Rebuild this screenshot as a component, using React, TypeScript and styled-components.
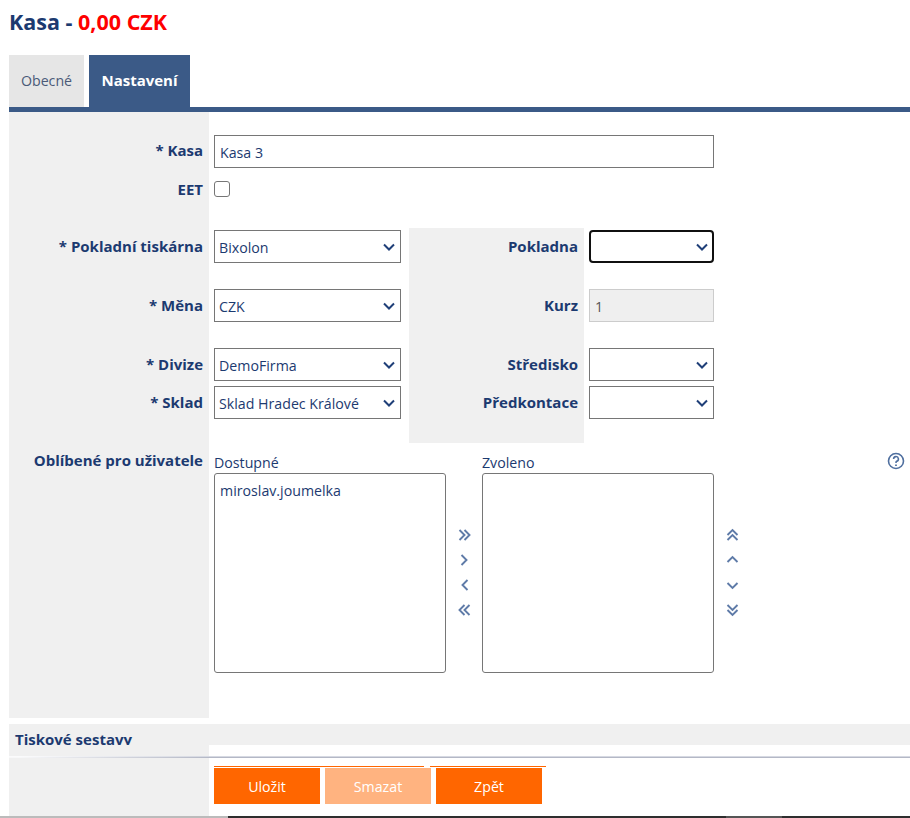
import React from "react";
import styled, { createGlobalStyle } from "styled-components";

const Global = createGlobalStyle`
  html, body { margin: 0; padding: 0; background: #fff; height: 100%; overflow: hidden; }
  body { font-family: "Open Sans", "DejaVu Sans", sans-serif; font-size: 14.2px; color: #1c3a70; }
`;
const boldFont = `font-weight: 700; font-size: 15px;`;
const Page = styled.div`
  width: 910px; height: 818px; display: flex; flex-direction: column; overflow: hidden;
`;
const Title = styled.h1`
  margin: 0; padding: 8px 0 0 9px; height: 55px; box-sizing: border-box;
  font-weight: 700; font-size: 21.5px; line-height: 28px; color: #1c3a70;
`;
const Money = styled.span` color: #ff0000; `;
const Tabs = styled.div`
  display: flex; gap: 5px; padding-left: 9px; height: 52px;
`;
const Tab = styled.div<{ $active?: boolean }>`
  display: flex; align-items: center; justify-content: center; padding-bottom: 2px; box-sizing: border-box;
  width: ${p => (p.$active ? 101 : 75)}px;
  background: ${p => (p.$active ? "#3b5a87" : "#e6e6e6")};
  color: ${p => (p.$active ? "#fff" : "#4a5a78")};
  ${p => (p.$active ? boldFont : "")}
`;
const TabRule = styled.div` height: 5px; background: #3b5a87; margin-left: 9px; `;
const Body = styled.div` margin-left: 9px; `;
const Row = styled.div<{ $h: number }>`
  display: flex; height: ${p => p.$h}px;
`;
const Label = styled.div<{ $top: number }>`
  width: 200px; flex: none; box-sizing: border-box; background: #f0f0f0;
  text-align: right; padding: ${p => p.$top}px 6px 0 0;
  ${boldFont} line-height: 20px; white-space: nowrap;
`;
const Field = styled.div<{ $top: number }>`
  padding: ${p => p.$top}px 0 0 5px;
`;
const TextInput = styled.input<{ $w: number }>`
  display: block; width: ${p => p.$w}px; height: 33px; box-sizing: border-box;
  border: 1px solid #767676; padding: 2px 5px 0; margin: 0; border-radius: 0; background: #fff;
  font: inherit; color: #1c3a70;
  &:disabled { background: #efefef; border-color: #ccc; color: #555; }
`;
const Check = styled.span`
  display: block; width: 16px; height: 16px; box-sizing: border-box;
  border: 1px solid #767676; border-radius: 3px; background: #fff;
`;
const Grid = styled.div`
  display: grid;
  grid-template-columns: 200px 200px 175px 130px;
  grid-template-rows: 59px 59px 38px 59px;
`;
const GreyLabel = styled.div`
  background: #f0f0f0; box-sizing: border-box; text-align: right;
  padding: 8px 6px 0 0; ${boldFont} line-height: 20px; white-space: nowrap;
`;
const SelectCell = styled.div` padding: 2px 0 0 5px; `;
const SelectBox = styled.div<{ $w: number; $focus?: boolean }>`
  position: relative; width: ${p => p.$w}px; height: 33px; box-sizing: border-box;
  border: ${p => (p.$focus ? "2px solid #101010" : "1px solid #767676")};
  border-radius: ${p => (p.$focus ? 4 : 0)}px; background: #fff;
  display: flex; align-items: center; padding: 2px 0 0 ${p => (p.$focus ? 3 : 4)}px;
  white-space: nowrap;
`;
const Chevron = styled.svg<{ $focus?: boolean }>`
  position: absolute; right: ${p => (p.$focus ? 4 : 5)}px; top: ${p => (p.$focus ? 11 : 12)}px;
  width: 12px; height: 8px;
`;
const Fav = styled.div` display: flex; height: 275px; position: relative; `;
const Lists = styled.div`
  display: flex; padding: 9px 0 0 5px; align-items: flex-start;
`;
const ListCol = styled.div`
  width: 232px; display: flex; flex-direction: column;
`;
const ListTitle = styled.div` line-height: 21px; height: 21px; `;
const ListBox = styled.div`
  height: 200px; box-sizing: border-box; border: 1px solid #767676; border-radius: 3px;
  padding: 7px 5px; line-height: 20px; background: #fff;
`;
const Arrows = styled.div<{ $w: number }>`
  width: ${p => p.$w}px; display: flex; flex-direction: column; align-items: center;
  gap: 9px; padding-top: 75px; flex: none;
`;
const ArrowIcon = styled.svg`
  width: 16px; height: 16px; display: block; fill: none; stroke: #5f7ba8; stroke-width: 1.9;
`;
const Help = styled.svg`
  position: absolute; right: 5px; top: 9px; width: 18px; height: 18px; fill: none; stroke: #4f6f9f;
`;
const Section = styled.div`
  margin: 6px 0 0 9px; height: 21px; background: #f0f0f0; padding-left: 6px;
  ${boldFont} line-height: 31px; overflow: hidden; color: #1c3a70;
`;
const Footer = styled.div`
  margin-left: 9px; height: 71px; background: linear-gradient(to right, #f0f0f0 200px, #fff 200px);
`;
const Rule = styled.div`
  margin-top: 11px; height: 2px;
  background:
    linear-gradient(to right, rgba(255,255,255,0.9) 10px, rgba(255,255,255,0) 200px),
    linear-gradient(to bottom, #d6d9e2 50%, #b4b8c6 50%);
`;
const Stripes = styled.div`
  display: flex; gap: 6px; margin: 8px 0 0 205px;
`;
const Stripe = styled.div<{ $w: number }>` width: ${p => p.$w}px; height: 1px; background: #ff6600; `;
const Buttons = styled.div`
  display: flex; gap: 5px; margin: 1px 0 0 205px;
`;
const Button = styled.div<{ $dim?: boolean }>`
  width: 106px; height: 36px; display: flex; align-items: center; justify-content: center;
  background: ${p => (p.$dim ? "#ffb380" : "#ff6600")}; color: #fff;
`;
const Bottom = styled.div`
  height: 2px; display: flex;
`;
const BottomPart = styled.div<{ $w: number; $c: string }>`
  width: ${p => p.$w}px; flex: ${p => (p.$w ? "none" : "1")}; background: ${p => p.$c};
`;

const Chev = ({ focus }: { focus?: boolean }) => (
  <Chevron $focus={focus} viewBox="0 0 12 8" fill="none" stroke="#1f3f78" strokeWidth="2">
    <path d="M1 1.5 L6 6.5 L11 1.5" />
  </Chevron>
);
const Sel = ({ w, children, focus }: { w: number; children?: React.ReactNode; focus?: boolean }) => (
  <SelectBox $w={w} $focus={focus}>{children}<Chev focus={focus} /></SelectBox>
);
const Arrow = ({ d }: { d: string }) => (
  <ArrowIcon viewBox="-0.5 0 16 16"><path d={d} /></ArrowIcon>
);

export default function App() {
  return (
    <Page>
      <Global />
      <Title>Kasa - <Money>0,00 CZK</Money></Title>
      <Tabs>
        <Tab>Obecné</Tab>
        <Tab $active>Nastavení</Tab>
      </Tabs>
      <TabRule />
      <Body>
        <Row $h={62}>
          <Label $top={28}>* Kasa</Label>
          <Field $top={23}><TextInput $w={500} defaultValue="Kasa 3" /></Field>
        </Row>
        <Row $h={54}>
          <Label $top={5}>EET</Label>
          <Field $top={7}><Check /></Field>
        </Row>
        <Grid>
          <GreyLabel>* Pokladní tiskárna</GreyLabel>
          <SelectCell><Sel w={187}>Bixolon</Sel></SelectCell>
          <GreyLabel>Pokladna</GreyLabel>
          <SelectCell><Sel w={125} focus /></SelectCell>

          <GreyLabel>* Měna</GreyLabel>
          <SelectCell><Sel w={187}>CZK</Sel></SelectCell>
          <GreyLabel>Kurz</GreyLabel>
          <SelectCell><TextInput $w={125} disabled defaultValue="1" /></SelectCell>

          <GreyLabel>* Divize</GreyLabel>
          <SelectCell><Sel w={187}>DemoFirma</Sel></SelectCell>
          <GreyLabel>Středisko</GreyLabel>
          <SelectCell><Sel w={125} /></SelectCell>

          <GreyLabel>* Sklad</GreyLabel>
          <SelectCell><Sel w={187}>Sklad Hradec Králové</Sel></SelectCell>
          <GreyLabel>Předkontace</GreyLabel>
          <SelectCell><Sel w={125} /></SelectCell>
        </Grid>
        <Fav>
          <Label $top={7}>Oblíbené pro uživatele</Label>
          <Lists>
            <ListCol>
              <ListTitle>Dostupné</ListTitle>
              <ListBox>miroslav.joumelka</ListBox>
            </ListCol>
            <Arrows $w={36}>
              <Arrow d="M3 3 L8 8 L3 13 M8 3 L13 8 L8 13" />
              <Arrow d="M5 3 L10 8 L5 13" />
              <Arrow d="M11 3 L6 8 L11 13" />
              <Arrow d="M13 3 L8 8 L13 13 M8 3 L3 8 L8 13" />
            </Arrows>
            <ListCol>
              <ListTitle>Zvoleno</ListTitle>
              <ListBox />
            </ListCol>
            <Arrows $w={36}>
              <Arrow d="M3 8 L8 3 L13 8 M3 13 L8 8 L13 13" />
              <Arrow d="M3 10 L8 5 L13 10" />
              <Arrow d="M3 6 L8 11 L13 6" />
              <Arrow d="M3 3 L8 8 L13 3 M3 8 L8 13 L13 8" />
            </Arrows>
          </Lists>
          <Help viewBox="0 0 18 18">
            <circle cx="9" cy="9" r="7.5" strokeWidth="1.6" />
            <path d="M6.6 7 A2.4 2.4 0 1 1 9.6 9.3 Q9 9.6 9 11" strokeWidth="1.6" />
            <path d="M9 12.4 V14" strokeWidth="1.8" />
          </Help>
        </Fav>
      </Body>
      <Section>Tiskové sestavy</Section>
      <Footer>
        <Rule />
        <Stripes><Stripe $w={210} /><Stripe $w={116} /></Stripes>
        <Buttons>
          <Button>Uložit</Button>
          <Button $dim>Smazat</Button>
          <Button>Zpět</Button>
        </Buttons>
      </Footer>
      <Bottom>
        <BottomPart $w={228} $c="#bbbbbb" />
        <BottomPart $w={498} $c="#2e2e2e" />
        <BottomPart $w={56} $c="#555555" />
        <BottomPart $w={0} $c="#2e2e2e" />
      </Bottom>
    </Page>
  );
}
